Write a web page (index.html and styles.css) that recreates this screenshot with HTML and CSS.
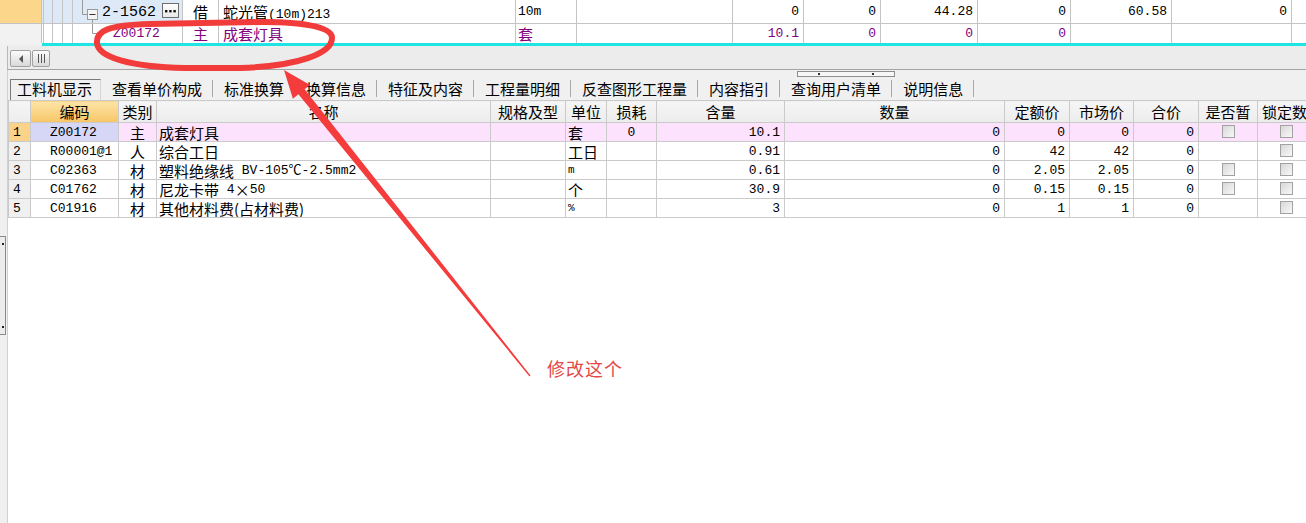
FILE: index.html
```html
<!DOCTYPE html>
<html lang="zh">
<head>
<meta charset="utf-8">
<title>工料机显示</title>
<link rel="stylesheet" href="styles.css">
</head>
<body>
<div class="top">
  <div class="trow r1">
    <div class="c lead1"></div>
    <div class="c tree tree1">
      <svg class="treesvg" width="60" height="23" viewBox="0 0 60 23">
        <g stroke="#c4c4c4" stroke-width="1">
          <line x1="1.5" y1="0" x2="1.5" y2="23"/>
          <line x1="10.5" y1="0" x2="10.5" y2="23"/>
          <line x1="20.5" y1="0" x2="20.5" y2="23"/>
          <line x1="30.5" y1="0" x2="30.5" y2="23"/>
        </g>
        <g stroke="#9a9a9a" stroke-width="1" fill="none">
          <line x1="40.5" y1="0" x2="40.5" y2="14.5"/>
          <line x1="40.5" y1="14.5" x2="45" y2="14.5"/>
          <line x1="50.5" y1="19.5" x2="50.5" y2="23"/>
          <rect x="45.5" y="9.5" width="10" height="10" fill="#f4f4f4"/>
          <line x1="47.5" y1="14.5" x2="53.5" y2="14.5" stroke="#333"/>
        </g>
      </svg>
      <span class="code1">2-1562</span>
      <span class="dots"><svg width="11" height="4" viewBox="0 0 11 4"><rect x="0" y="1" width="2.4" height="2.4" fill="#111"/><rect x="4.2" y="1" width="2.4" height="2.4" fill="#111"/><rect x="8.4" y="1" width="2.4" height="2.4" fill="#111"/></svg></span>
    </div>
    <div class="c ctr cn">借</div>
    <div class="c name"><span class="cn">蛇光管</span>(10m)213</div>
    <div class="c unit">10m</div>
    <div class="c"></div>
    <div class="c num">0</div>
    <div class="c num">0</div>
    <div class="c num">44.28</div>
    <div class="c num">0</div>
    <div class="c num">60.58</div>
    <div class="c num">0</div>
    <div class="c last"></div>
  </div>
  <div class="trow r2 purple">
    <div class="c lead2"></div>
    <div class="c tree">
      <svg class="treesvg" width="60" height="19" viewBox="0 0 60 19">
        <g stroke="#c4c4c4" stroke-width="1">
          <line x1="1.5" y1="0" x2="1.5" y2="19"/>
          <line x1="10.5" y1="0" x2="10.5" y2="19"/>
          <line x1="20.5" y1="0" x2="20.5" y2="19"/>
          <line x1="30.5" y1="0" x2="30.5" y2="19"/>
        </g>
        <g stroke="#9a9a9a" stroke-width="1">
          <line x1="50.5" y1="0" x2="50.5" y2="9.5"/>
          <line x1="50.5" y1="9.5" x2="58" y2="9.5"/>
        </g>
      </svg>
      <span class="code2">Z00172</span>
    </div>
    <div class="c ctr cn">主</div>
    <div class="c name cn">成套灯具</div>
    <div class="c unit cn">套</div>
    <div class="c"></div>
    <div class="c num">10.1</div>
    <div class="c num">0</div>
    <div class="c num">0</div>
    <div class="c num">0</div>
    <div class="c"></div>
    <div class="c"></div>
    <div class="c last"></div>
  </div>
</div>
<div class="cyanbar"><div class="cy-lead"></div><div class="cy-line"></div></div>
<div class="hscroll">
  <div class="sbtn"><svg width="6" height="8" viewBox="0 0 6 8"><polygon points="5,0 5,8 1,4" fill="#555"/></svg></div>
  <div class="sbtn sbtn2"><svg width="9" height="9" viewBox="0 0 9 9"><g stroke="#555" stroke-width="1"><line x1="1.5" y1="0" x2="1.5" y2="9"/><line x1="4.5" y1="0" x2="4.5" y2="9"/><line x1="7.5" y1="0" x2="7.5" y2="9"/></g></svg></div>
</div>
<div class="lower">
  <div class="lstrip"><div class="vsplit"><i class="dot dt"></i><i class="dot db"></i></div></div>
  <div class="main">
    <div class="tabs">
      <div class="tab sel">工料机显示</div>
      <div class="tab t2">查看单价构成</div>
      <div class="tab">标准换算</div>
      <div class="tab">换算信息</div>
      <div class="tab">特征及内容</div>
      <div class="tab">工程量明细</div>
      <div class="tab">反查图形工程量</div>
      <div class="tab">内容指引</div>
      <div class="tab">查询用户清单</div>
      <div class="tab">说明信息</div>
      <div class="grip"><i class="gd"></i><i class="gd"></i></div>
    </div>
    <div class="tblwrap">
      <table class="grid">
        <colgroup>
          <col class="w22"><col class="w88"><col class="w38"><col class="w334"><col class="w75"><col class="w41"><col class="w50"><col class="w128"><col class="w220"><col class="w65"><col class="w64"><col class="w65"><col class="w59"><col class="w60">
        </colgroup>
        <tr>
          <th></th><th class="hl">编码</th><th>类别</th><th>名称</th><th>规格及型</th><th>单位</th><th>损耗</th><th>含量</th><th>数量</th><th>定额价</th><th>市场价</th><th>合价</th><th>是否暂</th><th class="lh">锁定数</th>
        </tr>
        <tr class="sel">
          <td class="rn">1</td><td class="code">Z00172</td><td class="ctr cn">主</td><td class="nm cn">成套灯具</td><td></td><td class="un cn">套</td><td class="ctr">0</td><td class="num">10.1</td><td class="num">0</td><td class="num">0</td><td class="num">0</td><td class="num">0</td><td class="ctr"><span class="cb"></span></td><td class="lk"><span class="cb"></span></td>
        </tr>
        <tr>
          <td class="rn">2</td><td class="code">R00001@1</td><td class="ctr cn">人</td><td class="nm cn">综合工日</td><td></td><td class="un cn">工日</td><td></td><td class="num">0.91</td><td class="num">0</td><td class="num">42</td><td class="num">42</td><td class="num">0</td><td></td><td class="lk"><span class="cb"></span></td>
        </tr>
        <tr>
          <td class="rn">3</td><td class="code">C02363</td><td class="ctr cn">材</td><td class="nm"><span class="cn">塑料绝缘线</span> BV-105℃-2.5mm2</td><td></td><td class="un sm">m</td><td></td><td class="num">0.61</td><td class="num">0</td><td class="num">2.05</td><td class="num">2.05</td><td class="num">0</td><td class="ctr"><span class="cb"></span></td><td class="lk"><span class="cb"></span></td>
        </tr>
        <tr>
          <td class="rn">4</td><td class="code">C01762</td><td class="ctr cn">材</td><td class="nm"><span class="cn">尼龙卡带</span> 4<span class="cn">×</span>50</td><td></td><td class="un cn">个</td><td></td><td class="num">30.9</td><td class="num">0</td><td class="num">0.15</td><td class="num">0.15</td><td class="num">0</td><td class="ctr"><span class="cb"></span></td><td class="lk"><span class="cb"></span></td>
        </tr>
        <tr>
          <td class="rn">5</td><td class="code">C01916</td><td class="ctr cn">材</td><td class="nm cn">其他材料费(占材料费)</td><td></td><td class="un sm">%</td><td></td><td class="num">3</td><td class="num">0</td><td class="num">1</td><td class="num">1</td><td class="num">0</td><td></td><td class="lk"><span class="cb"></span></td>
        </tr>
      </table>
    </div>
    <div class="blank"></div>
  </div>
</div>
<svg class="annot" width="1306" height="523" viewBox="0 0 1306 523">
  <path d="M 97,43 C 96,31 108,25 150,24 L 262,22 C 305,22 332,27 332,38 C 332,53 300,66 240,68 L 185,68 C 130,67 98,57 97,43 Z" fill="none" stroke="#f23b3b" stroke-width="6"/>
  <polygon points="284,70 310.1,84.9 304.6,89.3 530.5,375.6 529.5,376.4 298.4,94.3 292.9,98.7" fill="#f53c3c"/>
</svg>
<div class="note">修改这个</div>
</body>
</html>
```
FILE: styles.css
```css
* { box-sizing: border-box; }
html, body { margin: 0; padding: 0; }
body {
  width: 1306px;
  height: 523px;
  overflow: hidden;
  position: relative;
  background: #f0f0f0;
  font-family: "Liberation Mono", "Noto Sans CJK SC", monospace;
  font-size: 13px;
  color: #000;
}
.cn { font-family: "Noto Sans CJK SC", sans-serif; font-size: 15px; }

/* top grid */
.trow {
  display: grid;
  grid-template-columns: 42px 141px 36px 297px 61px 156px 71px 77px 97px 93px 101px 120px 1fr;
  background: #fff;
}
.r1 { height: 24px; }
.r2 { height: 19px; }
.c {
  border-right: 1px solid #c4c4c4;
  white-space: nowrap;
  overflow: hidden;
}
.c.last { border-right: none; }
.r1 .c { border-bottom: 1px solid #c4c4c4; line-height: 23px; }
.r2 .c { line-height: 19px; }
.lead1 { background: #fcd68a; }
.lead2 { background: #f2f2f2; }
.tree { display: flex; align-items: flex-start; }
.tree1 { background: #dde9f6; }
.treesvg { display: block; flex: none; }
.code1 { font-size: 15px; line-height: 25px; }
.code2 { padding-left: 11px; }
.dots {
  margin-left: auto;
  margin-right: 3px;
  margin-top: 3px;
  width: 17px;
  height: 15px;
  border: 1px solid #6e6e6e;
  background: linear-gradient(#ffffff, #e8e8e8);
  display: flex;
  align-items: center;
  justify-content: center;
}
.dots svg { display: block; }
.ctr { text-align: center; }
.name { padding-left: 4px; }
.unit { padding-left: 2px; }
.num { text-align: right; padding-right: 4px; }
.purple { color: #800080; }

.cyanbar { display: flex; height: 3px; }
.cy-lead { width: 42px; background: #f0f0f0; }
.cy-line { flex: 1; background: #1fe4e4; }

.hscroll {
  height: 24px;
  margin-left: 7px;
  border-left: 1px solid #b8b8b8;
  border-bottom: 1px solid #a4a4a4;
  background: #ececec;
  display: flex;
  gap: 1px;
  padding: 4px 0 0 2px;
}
.sbtn {
  width: 21px;
  height: 17px;
  border: 1px solid #a0a0a0;
  border-radius: 2px;
  background: linear-gradient(#fbfbfb, #d9d9d9);
  display: flex;
  align-items: center;
  justify-content: center;
}
.sbtn svg { display: block; }
.sbtn2 { width: 18px; }

/* lower panel */
.lower { display: flex; height: 453px; }
.lstrip {
  width: 8px;
  flex: none;
  border-right: 1px solid #d0d0d0;
  padding-top: 166px;
}
.vsplit {
  width: 6px;
  height: 99px;
  border: 1px solid #8a8a8a;
  border-left: none;
  background: #ececec;
  display: flex;
  flex-direction: column;
  justify-content: space-between;
  align-items: center;
  padding: 6px 0;
}
.dot { display: block; width: 2px; height: 2px; background: #222; }
.main { flex: 1; min-width: 0; display: flex; flex-direction: column; }

.tabs {
  height: 30px;
  flex: none;
  display: flex;
  align-items: flex-end;
  background: #f0f0f0;
  position: relative;
  padding-left: 2px;
}
.tab {
  font-family: "Noto Sans CJK SC", sans-serif;
  font-size: 15px;
  height: 17px;
  line-height: 17px;
  margin-bottom: 3px;
  padding: 0 10px 0 11px;
  border-right: 1px solid #a8a8a8;
  white-space: nowrap;
}
.tab.sel {
  width: 91px;
  height: 21px;
  line-height: 18px;
  margin-bottom: 0;
  padding: 0 0 0 6px;
  border: 1px solid;
  border-color: #7a7a7a #d6d6d6 transparent #7a7a7a;
  border-bottom: none;
}
.tab.t2 { padding-left: 11px; }
.grip {
  position: absolute;
  left: 789px;
  top: 1px;
  width: 98px;
  height: 6px;
  border: 1px solid #8e8e8e;
  background: #f7f7f7;
  display: flex;
  justify-content: space-between;
  align-items: center;
  padding: 0 20px;
}
.gd { display: block; width: 2px; height: 2px; background: #333; }

.tblwrap { overflow: hidden; background: #fff; flex: none; }
.grid {
  border-collapse: collapse;
  table-layout: fixed;
  width: 1309px;
}
.w22 { width: 22px; } .w88 { width: 88px; } .w38 { width: 38px; } .w334 { width: 334px; }
.w75 { width: 75px; } .w41 { width: 41px; } .w50 { width: 50px; } .w128 { width: 128px; }
.w220 { width: 220px; } .w65 { width: 65px; } .w64 { width: 64px; } .w59 { width: 59px; } .w60 { width: 60px; }
.grid th, .grid td {
  border: 1px solid #cacaca;
  padding: 0;
  height: 19px;
  line-height: 17px;
  white-space: nowrap;
  overflow: hidden;
}
.grid td .cn { line-height: 17px; vertical-align: top; }
.grid td.cn { line-height: 17px; }
.grid th {
  height: 22px;
  background: linear-gradient(#f6f6f6, #ececec);
  font-family: "Noto Sans CJK SC", sans-serif;
  font-size: 15px;
  font-weight: normal;
  text-align: center;
  line-height: 20px;
}
.grid th.hl { background: linear-gradient(#fde4a8, #f7c666); }
.grid th.lh { text-align: left; padding-left: 4px; }
.grid td.rn { background: #f0f0f0; padding-left: 4px; }
.grid td.code { text-align: left; padding-left: 19px; }
.grid td.nm { padding-left: 2px; }
.grid td.un { padding-left: 2px; }
.grid td.sm { font-size: 11px; }
.grid td.num { text-align: right; padding-right: 4px; }
.grid td.lk { padding-left: 22px; }
.grid tr.sel td { background: #fde2fd; }
.grid tr.sel td.code { background: #d6d6f6; }
.grid tr.sel td.rn { background: #fad28a; }
.cb {
  display: inline-block;
  width: 13px;
  height: 13px;
  border: 1px solid #a2a2a2;
  background: linear-gradient(135deg, #d8d8d8, #f8f8f8);
  vertical-align: middle;
  margin-top: -2px;
}
.blank { flex: 1; background: #fff; }

/* annotation overlay */
.annot { position: absolute; left: 0; top: 0; pointer-events: none; }
.note {
  position: absolute;
  left: 547px;
  top: 358px;
  font-family: "Noto Sans CJK SC", sans-serif;
  font-size: 18px;
  line-height: 20px;
  letter-spacing: 1px;
  color: #e34848;
}
```
